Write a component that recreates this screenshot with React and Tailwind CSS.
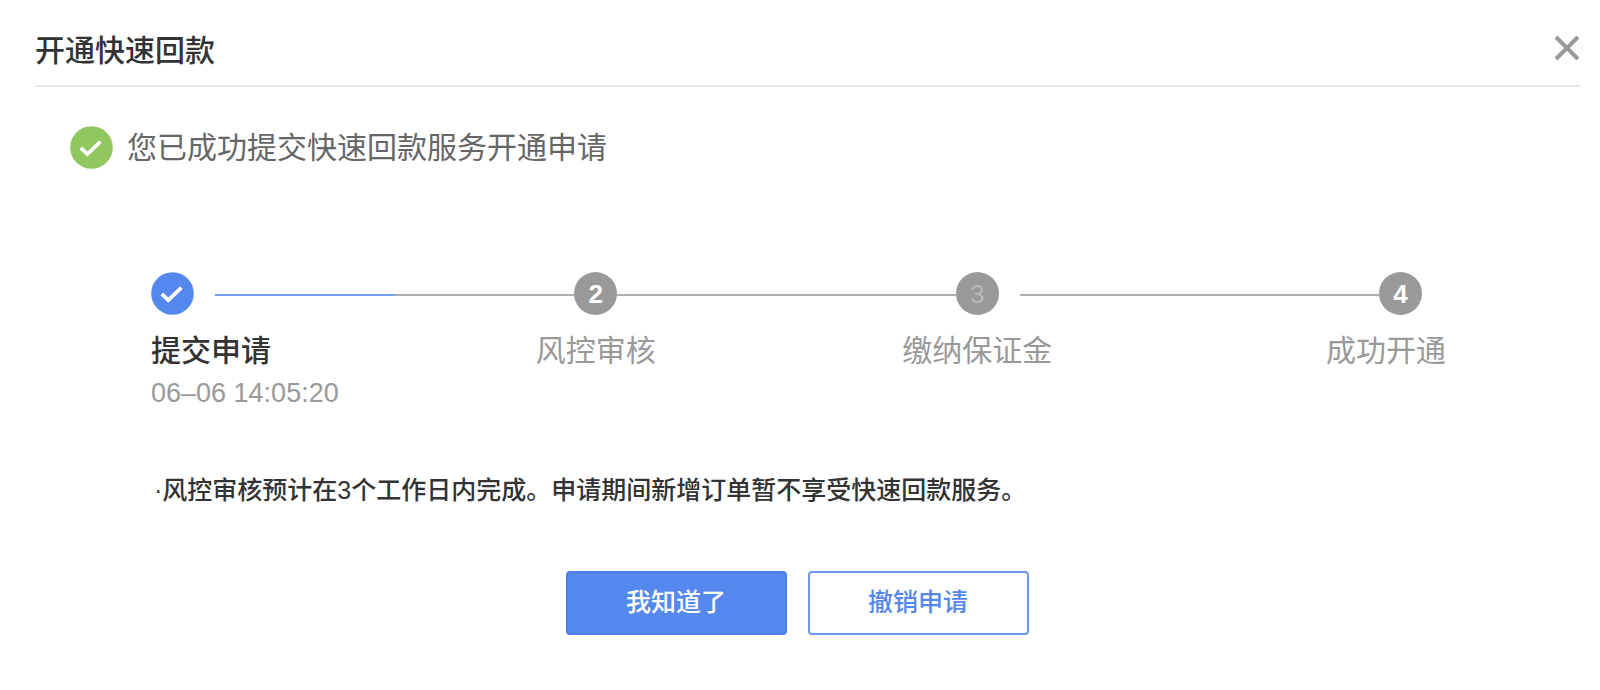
import clsx from 'clsx'

const steps = [
  { label: '提交申请', time: '06–06 14:05:20', done: true },
  { label: '风控审核' },
  { label: '缴纳保证金', muted: true },
  { label: '成功开通' },
]

function CheckCircle({ className }) {
  return (
    <svg viewBox="0 0 43 43" className={clsx('size-[43px] shrink-0', className)} aria-hidden="true">
      <circle cx="21.5" cy="21.5" r="21.3" fill="currentColor" />
      <path d="M10.8 21.9 L17.3 28.2 L30.4 15.6" fill="none" stroke="#fff" strokeWidth="3.7" />
    </svg>
  )
}

function StepMark({ step, number }) {
  if (step.done) return <CheckCircle className="text-[#5588ee]" />
  return (
    <span
      className={clsx(
        'flex size-[43px] items-center justify-center rounded-full bg-[#999] text-[26px] leading-8',
        step.muted ? 'text-[#b8b8b8]' : 'font-bold text-white'
      )}
    >
      {number}
    </span>
  )
}

function Step({ step, number, last }) {
  const align = number === 1 ? 'items-start' : last ? 'items-end' : 'items-center'
  return (
    <li className={clsx('flex w-[43px] shrink-0 flex-col whitespace-nowrap', align)}>
      <StepMark step={step} number={number} />
      <span
        className={clsx(
          'mt-4 text-[30px] leading-10',
          step.done ? 'font-medium text-[#333]' : 'text-[#999]',
          last && '-mr-6'
        )}
      >
        {step.label}
      </span>
      {step.time && <time className="mt-1.5 text-[27px] leading-8 text-[#999]">{step.time}</time>}
    </li>
  )
}

function Connector({ className, progress }) {
  return (
    <li aria-hidden="true" className={clsx('mt-[22px] flex h-[2px] bg-[#b0b0b0]', className)}>
      {progress && <span className="w-1/2 bg-[#77a0f2]" />}
    </li>
  )
}

export default function App() {
  return (
    <section
      role="dialog"
      aria-labelledby="dialog-title"
      className="bg-white pb-[54px] font-['Liberation_Sans','Noto_Sans_CJK_SC',sans-serif]"
    >
      <header className="ml-[35px] mr-5 flex items-center justify-between border-b-2 border-[#e8e8e8] pb-3.5 pt-[31px]">
        <h1 id="dialog-title" className="text-[30px] font-medium leading-10 text-[#333]">开通快速回款</h1>
        <button type="button" aria-label="关闭" className="pb-1.5 text-[#999]">
          <svg viewBox="0 0 26 26" className="size-[26px]" fill="none" stroke="currentColor" strokeWidth="4">
            <path d="M2 2 L24 24 M24 2 L2 24" />
          </svg>
        </button>
      </header>

      <div className="ml-[70px] mt-[39px] flex items-center gap-[14px]">
        <CheckCircle className="text-[#91c75f]" />
        <p className="text-[30px] leading-10 text-[#666]">您已成功提交快速回款服务开通申请</p>
      </div>

      <ol className="ml-[151px] mr-[178px] mt-[103px] flex items-start">
        <Step step={steps[0]} number={1} />
        <Connector className="ml-[21px] flex-[360]" progress />
        <Step step={steps[1]} number={2} />
        <Connector className="flex-[339]" />
        <Step step={steps[2]} number={3} />
        <Connector className="ml-[21px] flex-[360]" />
        <Step step={steps[3]} number={4} last />
      </ol>

      <p className="ml-[154px] mt-[61px] text-[25px] font-medium leading-10 text-[#333]">
        ·风控审核预计在3个工作日内完成。申请期间新增订单暂不享受快速回款服务。
      </p>

      <div className="mt-[61px] flex justify-center gap-[21px] pr-[6px]">
        <button type="button" className="h-16 w-[221px] rounded-sm border-2 border-[#4d80ed] bg-[#5588ee] text-[25px] font-medium text-white">
          我知道了
        </button>
        <button type="button" className="h-16 w-[221px] rounded-sm border-2 border-[#6c98f0] bg-white text-[25px] font-medium text-[#5588ee]">
          撤销申请
        </button>
      </div>
    </section>
  )
}
